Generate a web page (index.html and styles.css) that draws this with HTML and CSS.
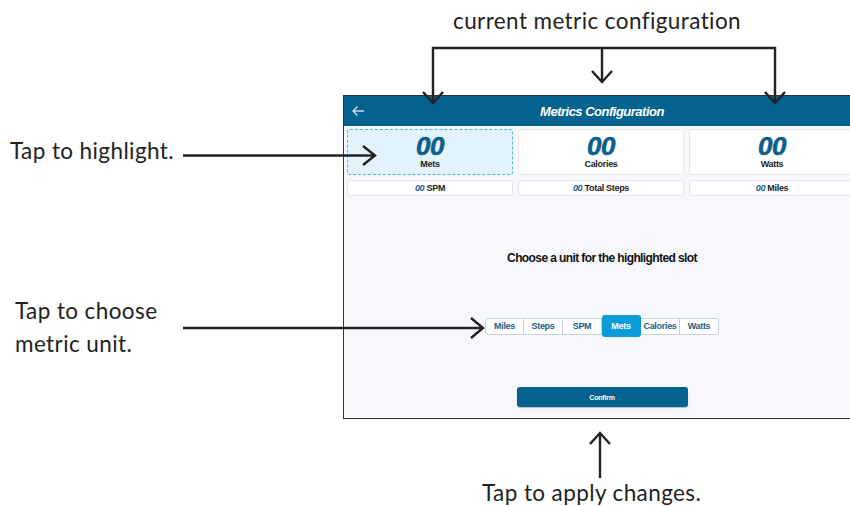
FILE: index.html
```html
<!DOCTYPE html>
<html>
<head>
    <title>Metrics Configuration</title>
    <link rel="stylesheet" href="styles.css">
</head>
<body>
    <div class="page">
        <div class="screen">
            <div class="topbar">
                <svg class="back" width="14" height="12" viewBox="0 0 14 12">
                    <path d="M13 6 H2 M6.5 1.5 L2 6 L6.5 10.5" fill="none" stroke="#c9dce8" stroke-width="1.4"/>
                </svg>
                <span class="title">Metrics Configuration</span>
            </div>

            <div class="slots">
                <div class="slot big selected"><b>00</b><span>Mets</span></div>
                <div class="slot big"><b>00</b><span>Calories</span></div>
                <div class="slot big"><b>00</b><span>Watts</span></div>
                <div class="slot small"><b>00</b> SPM</div>
                <div class="slot small"><b>00</b> Total Steps</div>
                <div class="slot small"><b>00</b> Miles</div>
            </div>

            <p class="prompt">Choose a unit for the highlighted slot</p>

            <div class="units">
                <button>Miles</button>
                <button>Steps</button>
                <button>SPM</button>
                <button class="active">Mets</button>
                <button>Calories</button>
                <button>Watts</button>
            </div>

            <div class="confirm-row">
                <button class="confirm">Confirm</button>
            </div>
        </div>

        <!-- callouts -->
        <div class="note note-top">current metric configuration</div>
        <div class="note note-left">Tap to highlight.</div>
        <div class="note note-unit">Tap to choose<br>metric unit.</div>
        <div class="note note-bottom">Tap to apply changes.</div>

        <svg class="arrows" width="850" height="506" viewBox="0 0 850 506">
            <g fill="none" stroke="#222" stroke-width="2.4">
                <path d="M433 103 V48 H775 V103"/>
                <path d="M602 48 V82"/>
                <path d="M423 92 L433 103 L443 92"/>
                <path d="M592 71 L602 82 L612 71"/>
                <path d="M765 92 L775 103 L785 92"/>
                <path d="M183 155.5 H374"/>
                <path d="M363 146 L375 155.5 L363 165"/>
                <path d="M183 328 H482"/>
                <path d="M471 318 L483 328 L471 338"/>
                <path d="M600 433 V478"/>
                <path d="M590 444 L600 433 L610 444"/>
            </g>
        </svg>
    </div>
</body>
</html>
```
FILE: styles.css
```css
body {
    margin: 0;
    background: #fff;
    overflow: hidden;
    font-family: "Liberation Sans", Arial, sans-serif;
}

.page {
    position: relative;
    width: 850px;
    height: 506px;
    overflow: hidden;
}

.screen {
    margin: 95px 0 0 343px;
    width: 516px;
    height: 322px;
    border: 1px solid #333;
    background: #f7f8fc;
}

.topbar {
    position: relative;
    height: 30px;
    background: #04628f;
    color: #fff;
    display: flex;
    align-items: center;
    justify-content: center;
}

.back {
    position: absolute;
    left: 7px;
    top: 9px;
}

.title {
    font-weight: bold;
    font-style: italic;
    font-size: 13px;
    letter-spacing: -0.5px;
}

.slots {
    display: grid;
    grid-template-columns: 166px 166px 166px;
    column-gap: 5px;
    row-gap: 5px;
    padding: 3px 0 0 3px;
}

.slot {
    background: #fff;
    border: 1px solid #e6e8ee;
    border-radius: 3px;
    color: #1c1c1c;
    font-weight: bold;
    text-align: center;
    letter-spacing: -0.3px;
}

.slot b {
    color: #0b5f8a;
    font-style: italic;
}

.big {
    height: 44px;
    display: flex;
    flex-direction: column;
    align-items: center;
    font-size: 9px;
}

.big b {
    font-size: 26px;
    line-height: 26px;
    margin-top: 3px;
    letter-spacing: -0.5px;
    -webkit-text-stroke: 0.6px #0b5f8a;
}

.big span {
    line-height: 11px;
}

.selected {
    background: #e2f3fb;
    border: 1px dashed #4fb3e3;
}

.small {
    height: 14px;
    line-height: 14px;
    font-size: 9px;
}

.prompt {
    margin: 55px 0 0;
    text-align: center;
    font-weight: bold;
    font-size: 12px;
    letter-spacing: -0.6px;
    color: #111;
}

.units {
    display: flex;
    justify-content: center;
    align-items: center;
    margin-top: 50px;
    height: 22px;
}

.units button {
    width: 39px;
    height: 17px;
    padding: 0;
    border: 1px solid #c9d3dc;
    border-left: none;
    background: #fff;
    color: #1b5f86;
    font-family: inherit;
    font-weight: bold;
    font-size: 9px;
    letter-spacing: -0.3px;
}

.units button:first-child {
    border-left: 1px solid #c9d3dc;
    border-radius: 3px 0 0 3px;
}

.units button:last-child {
    border-radius: 0 3px 3px 0;
}

.units button.active {
    height: 22px;
    background: #0b9bd9;
    border-color: #0b9bd9;
    color: #fff;
    border-radius: 3px;
}

.confirm-row {
    display: flex;
    justify-content: center;
    margin-top: 50px;
}

.confirm {
    width: 171px;
    height: 20px;
    border: none;
    border-radius: 3px;
    background: #04628f;
    color: #fff;
    font-family: inherit;
    font-weight: bold;
    font-size: 7px;
    letter-spacing: -0.2px;
    box-shadow: 0 1px 1px rgba(0, 0, 0, 0.25);
}

.note {
    position: absolute;
    font-family: Lato, "Open Sans", sans-serif;
    font-size: 22.5px;
    letter-spacing: 0.4px;
    line-height: 22px;
    color: #222;
    white-space: nowrap;
}

.note-top {
    left: 453px;
    top: 10px;
}

.note-left {
    left: 10px;
    top: 140px;
}

.note-unit {
    left: 15px;
    top: 294px;
    line-height: 33px;
}

.note-bottom {
    left: 482px;
    top: 482px;
}

.arrows {
    position: absolute;
    left: 0;
    top: 0;
    pointer-events: none;
}
```
